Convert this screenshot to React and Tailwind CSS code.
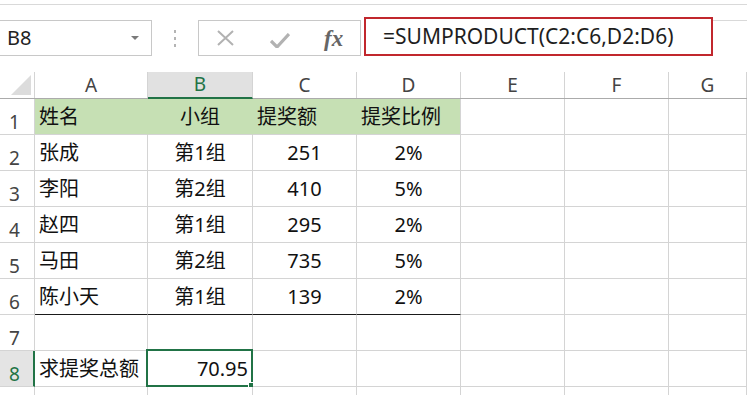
import { Fragment } from "react";

const cols = [
  { key: "A", w: "w-[113px]" },
  { key: "B", w: "w-[105px]" },
  { key: "C", w: "w-[104px]" },
  { key: "D", w: "w-[104px]" },
  { key: "E", w: "w-[104px]" },
  { key: "F", w: "w-[104px]" },
  { key: "G", w: "flex-1" },
];

// [text, align] per column A-D
const rows = [
  [["姓名", "l"], ["小组", "c"], ["提奖额", "l"], ["提奖比例", "l"]],
  [["张成", "l"], ["第1组", "c"], ["251", "c"], ["2%", "c"]],
  [["李阳", "l"], ["第2组", "c"], ["410", "c"], ["5%", "c"]],
  [["赵四", "l"], ["第1组", "c"], ["295", "c"], ["2%", "c"]],
  [["马田", "l"], ["第2组", "c"], ["735", "c"], ["5%", "c"]],
  [["陈小天", "l"], ["第1组", "c"], ["139", "c"], ["2%", "c"]],
  [],
  [["求提奖总额", "l"], ["70.95", "r"]],
  [],
];

const alignCls = { l: "justify-start", c: "justify-center", r: "justify-end" };

function Cell({ col, r, c, data }) {
  const green = r === 0 && c < 4;
  const blackBottom = r === 5 && c < 4;
  const selected = r === 7 && c === 1;
  let cls = `${col.w} h-full shrink-0 flex items-center px-[4px] border-r border-b relative `;
  cls += green ? "bg-[#c6e0b4] " : "bg-white ";
  cls += green && c < 3 ? "border-r-[#c6e0b4] " : "border-r-[#d4d4d4] ";
  cls += blackBottom ? "border-b-[#1a1a1a] " : "border-b-[#d4d4d4] ";
  cls += data ? alignCls[data[1]] : "";
  return (
    <div className={cls}>
      {data && <span className="whitespace-nowrap">{data[0]}</span>}
      {selected && (
        <div className="absolute -left-[2px] -top-[2px] -right-[1px] -bottom-[1px] border-2 border-[#217346]">
          <div className="absolute -right-[4px] -bottom-[4px] w-[7px] h-[7px] bg-[#217346] border border-white" />
        </div>
      )}
    </div>
  );
}

export default function App() {
  return (
    <div className="w-[747px] h-[395px] overflow-hidden bg-white text-[#111] font-['Noto_Sans','Noto_Sans_CJK_SC',sans-serif]">
      {/* top strip */}
      <div className="h-[5px] border-b border-[#d9d9d9]" />

      {/* formula bar */}
      <div className="flex h-[52px] pt-[12px]">
        <div className="w-[152px] h-[36px] mt-[3px] border border-l-0 border-[#c8c8c8] flex items-center pl-[7px] pr-[12px]">
          <span className="text-[20px] text-[#222] leading-none">B8</span>
          <svg className="ml-auto" width="8" height="4" viewBox="0 0 8 4">
            <path d="M0 0h8L4 4z" fill="#7a7a7a" />
          </svg>
        </div>
        <div className="w-[46px] flex flex-col items-center justify-center gap-[4px] mt-[3px] h-[36px]">
          <span className="w-[2px] h-[3px] bg-[#b4b4b4]" />
          <span className="w-[2px] h-[3px] bg-[#b4b4b4]" />
          <span className="w-[2px] h-[3px] bg-[#b4b4b4]" />
        </div>
        <div className="w-[163px] h-[36px] mt-[3px] border border-[#c8c8c8] flex items-center">
          <svg className="ml-[18px]" width="17" height="16" viewBox="0 0 17 16">
            <path d="M1 1L16 15M16 1L1 15" stroke="#b2b2b2" strokeWidth="2" fill="none" />
          </svg>
          <svg className="ml-[36px] mt-[4px]" width="20" height="15" viewBox="0 0 20 15">
            <path d="M1 8l6 6L19 1" stroke="#b2b2b2" strokeWidth="3.2" fill="none" strokeLinejoin="round" />
          </svg>
          <span className="ml-[34px] text-[23px] italic font-semibold font-['Liberation_Serif',serif] text-[#666] leading-none">fx</span>
        </div>
        <div className="ml-[3px] w-[349px] h-[39px] border-2 border-[#c1272d] flex items-center pl-[17px]">
          <span className="text-[21px] text-[#1e1e1e] leading-none">=SUMPRODUCT(C2:C6,D2:D6)</span>
        </div>
        <div className="flex-1 h-[36px] mt-[3px] border-t border-[#d9d9d9]" />
      </div>

      {/* grid */}
      <div className="mt-[15px]">
        {/* column headers */}
        <div className="flex h-[27px] border-b border-[#ababab] text-[#444] text-[19px]">
          <div className="w-[35px] shrink-0 border-r border-[#d4d4d4] flex items-end justify-end pr-[3px] pb-[3px]">
            <svg width="20" height="20" viewBox="0 0 20 20">
              <path d="M20 0V20H0z" fill="#dcdcdc" />
            </svg>
          </div>
          {cols.map((col) => (
            <div
              key={col.key}
              className={`${col.w} shrink-0 flex items-center justify-center border-r border-[#d4d4d4] ${
                col.key === "B" ? "bg-[#e1e1e1] text-[#217346] border-b-2 border-b-[#217346] -mb-px" : ""
              }`}
            >
              {col.key}
            </div>
          ))}
        </div>

        {rows.map((r, ri) => (
          <div key={ri} className="flex h-[36px] text-[20px]">
            <div
              className={`w-[35px] shrink-0 flex items-end pl-[9px] pb-[2px] text-[19px] leading-none border-b border-[#d4d4d4] ${
                ri === 7
                  ? "bg-[#e4e4e4] text-[#217346] border-r-2 border-r-[#217346]"
                  : "text-[#444] border-r border-r-[#d4d4d4]"
              }`}
            >
              {ri < 8 ? ri + 1 : ""}
            </div>
            {cols.map((col, ci) => (
              <Fragment key={col.key}>
                <Cell col={col} r={ri} c={ci} data={r[ci]} />
              </Fragment>
            ))}
          </div>
        ))}
      </div>
    </div>
  );
}
